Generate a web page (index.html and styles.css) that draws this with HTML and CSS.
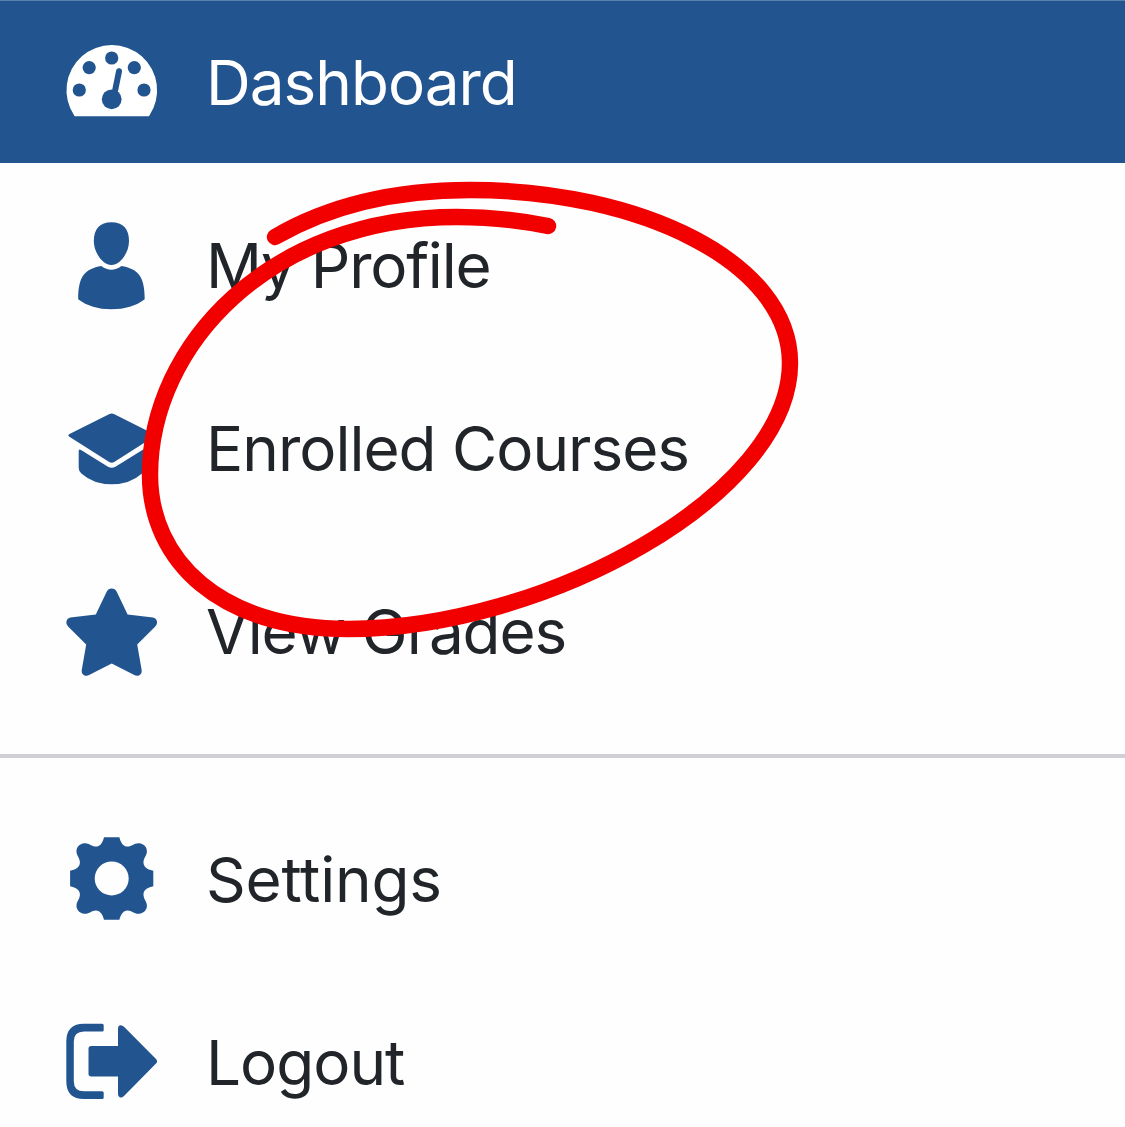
FILE: index.html
```html
<!DOCTYPE html>
<html lang="en">

<head>
<title>Dashboard</title>
<meta charset="UTF-8">
<meta name="viewport" content="width=device-width, initial-scale=1.0">
<link rel="stylesheet" href="styles.css">
</head>

<body>
<nav class="menu">
<a class="item active" href="#">
<svg class="icon" viewBox="0 0 92 92">
<path d="M8.3 79.7A45.3 45.3 0 1 1 83.3 79.7Q82.7 80.3 82 80.3H9.6Q8.8 80.3 8.3 79.7Z"/>
<g class="dial">
<circle cx="13.3" cy="54" r="6.6"/>
<circle cx="23.2" cy="31.6" r="6.6"/>
<circle cx="45.7" cy="22" r="6.6"/>
<circle cx="68.3" cy="31.6" r="6.6"/>
<circle cx="78" cy="54" r="6.6"/>
<circle cx="45.7" cy="63.3" r="9.9"/>
<path class="needle" d="M48 60L53 35.3"/>
</g>
</svg>
<span class="label">Dashboard</span>
</a>
<a class="item" href="#">
<svg class="icon" viewBox="0 0 92 92">
<path d="M45.4 3.3C57 3.3 63 10 63 22C63 34 54 46 45.4 46C37 46 27.8 34 27.8 22C27.8 10 34 3.3 45.4 3.3Z"/>
<path d="M35.3 47Q45.4 54.5 55.4 47C72 50 78.7 57 78.7 80.3C70 87 59 90.3 45.4 90.3C32 90.3 21 87 12.2 80.3C12.2 57 19 50 35.3 47Z"/>
</svg>
<span class="label profile">My Profile</span>
</a>
<a class="item" href="#">
<svg class="icon" viewBox="0 0 92 92">
<path d="M43.5 12.1Q45.7 11 47.9 12.1L88.2 32.3Q89.8 33.3 88.2 34.5L48.2 60Q45.7 61.4 43.2 60L3 34.5Q1.6 33.3 3 32.3Z"/>
<path d="M12.7 49Q12.7 46.5 15 48L42 64.8Q45.7 66.8 49.4 64.8L76.4 48Q78.7 46.5 78.7 49V66Q78.7 69 76 71.5Q64 82.3 45.7 82.3Q27.4 82.3 15.4 71.5Q12.7 69 12.7 66Z"/>
</svg>
<span class="label">Enrolled Courses</span>
</a>
<a class="item" href="#">
<svg class="icon" viewBox="0 -3.4 92 92">
<path d="M40.8 3Q42.3 0 45.7 0Q49.1 0 50.6 3L61.6 26L87 29.2Q90 29.6 91 33Q91.6 35.8 89.3 38L71.2 56L75.7 81.8Q76 85.5 73 87Q70.6 88 68.3 86.7L45.7 75L23.1 86.7Q20.8 88 18.4 87Q15.4 85.5 15.7 81.8L20.2 56L2.1 38Q-.2 35.8.4 33Q1.4 29.6 4.4 29.2L29.8 26Z"/>
</svg>
<span class="label grades">View Grades</span>
</a>
<hr class="divider">
<a class="item" href="#">
<svg class="icon" viewBox="0 0 92 92">
<path fill-rule="evenodd" d="M38 4.2H53.4C54.5 9 57 13.6 61.5 13.6C65.5 13.8 68.5 9.8 73 10.3C78 10.7 81.3 14.5 80.9 19C80.5 23 77.2 25.5 77.5 30C77.8 34.5 82.5 37 87.3 37.7V53.3C82.5 54.3 77.8 56.5 77.5 61C77.2 65.5 80.5 68 80.9 72C81.3 76.5 78 80.3 73 80.7C68.5 81.2 65.5 77.2 61.5 77.4C57 77.4 54.5 82 53.4 86.8H38C36.9 82 34.4 77.4 29.9 77.4C25.9 77.2 22.9 81.2 18.4 80.7C13.4 80.3 10.1 76.5 10.5 72C10.9 68 14.2 65.5 13.9 61C13.6 56.5 8.9 54.3 4.1 53.3V37.7C8.9 37 13.6 34.5 13.9 30C14.2 25.5 10.9 23 10.5 19C10.1 14.5 13.4 10.7 18.4 10.3C22.9 9.8 25.9 13.8 29.9 13.6C34.4 13.6 36.9 9 38 4.2ZM62.7 45.4A17 17 0 1 0 28.7 45.4A17 17 0 1 0 62.7 45.4Z"/>
</svg>
<span class="label settings">Settings</span>
</a>
<a class="item" href="#">
<svg class="icon" viewBox="0 0 92 92">
<path d="M36.2 7.7Q37.7 7.7 37.7 9.2V14Q37.7 15.5 36.2 15.5H18Q7.8 15.5 7.8 25.5V65.2Q7.8 75.2 18 75.2H36.2Q37.7 75.2 37.7 76.7V81.5Q37.7 83 36.2 83H18Q.3 83 .3 65.2V25.5Q.3 7.7 18 7.7Z"/>
<path d="M25.2 30H52V12.5Q52 9.8 54 9.2Q56 8.8 58 10.7L90 43Q92.3 45.3 90 47.6L58 80Q56 82 54 81.5Q52 81 52 78.2V60.5H25.2Q22.5 60.5 22.5 57.8V32.7Q22.5 30 25.2 30Z"/>
</svg>
<span class="label">Logout</span>
</a>
</nav>

<!-- hand-drawn loop over the menu -->
<svg class="scribble" viewBox="0 0 1125 1127">
<path d="M275 237C330 205 395 190 470 190C640 190 790 262 790 363C790 495 545 629 348 629C220 629 150 560 150 475C150 345 270 217 457 217Q505 217 548 226"/>
</svg>
</body>
</html>
```
FILE: styles.css
```css
body {
    position: relative;
    margin: 0;
    height: 1127px;
    overflow: hidden;
    background-color: #fefefe;
    font-family: Inter, "Liberation Sans", sans-serif;
}
.menu {
    display: flex;
    flex-direction: column;
}
.item {
    display: flex;
    box-sizing: border-box;
    height: 163px;
    margin-bottom: 20px;
    padding: 36px 0 0 66px;
    gap: 48px;
    color: #212529;
    text-decoration: none;
}
.item.active {
    background-color: #225590;
    box-shadow: inset 0 1px #5a80ac;
    color: #fff;
}
.icon {
    flex: none;
    width: 92px;
    height: 92px;
    overflow: visible;
    fill: #225590;
}
.active .icon {
    fill: #fff;
}
.dial {
    fill: #225590;
}
.needle {
    stroke: #225590;
    stroke-width: 6;
    stroke-linecap: round;
}
.label {
    height: 92px;
    font-size: 62px;
    letter-spacing: -1px;
    line-height: 94px;
    white-space: nowrap;
}
.label.profile {
    letter-spacing: -1.25px;
}
.label.grades {
    letter-spacing: -1.1px;
}
.label.settings {
    letter-spacing: -0.2px;
}
.divider {
    width: 100%;
    height: 4px;
    margin: 22px 0 39px;
    border: 0;
    background-color: #cfcfd5;
}
.scribble {
    position: absolute;
    top: 0;
    left: 0;
    width: 1125px;
    height: 1127px;
    pointer-events: none;
}
.scribble path {
    fill: none;
    stroke: #f20000;
    stroke-width: 16.4;
    stroke-linecap: round;
}
```
